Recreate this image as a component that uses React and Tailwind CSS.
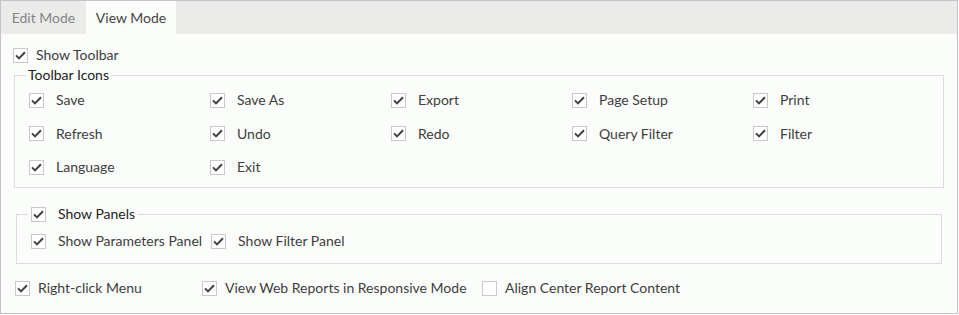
import React from 'react';

function Check({ checked = true }) {
  return (
    <span className="w-[15px] h-[15px] shrink-0 border border-[#c9c9c9] bg-white flex items-center justify-center">
      {checked && (
        <svg width="11" height="9" viewBox="0 0 11 9" fill="none">
          <path d="M1 4.4 L4 7.4 L10 1.2" stroke="#404040" strokeWidth="2" />
        </svg>
      )}
    </span>
  );
}

function Item({ label, checked = true, gap = 'gap-[12px]' }) {
  return (
    <div className={`h-[20px] flex items-center ${gap}`}>
      <Check checked={checked} />
      <span className="text-[#3d3d3d] whitespace-nowrap">{label}</span>
    </div>
  );
}

const icons = [
  'Save', 'Save As', 'Export', 'Page Setup', 'Print',
  'Refresh', 'Undo', 'Redo', 'Query Filter', 'Filter',
  'Language', 'Exit',
];

export default function App() {
  return (
    <div className="w-[958px] h-[314px] border border-[#c6c3c6] bg-[#fbfdfb] text-[14px] leading-[16px] flex flex-col" style={{ fontFamily: 'Lato, "Open Sans", sans-serif' }}>
      {/* tabs */}
      <div className="h-[33px] bg-[#ebecea] flex shrink-0">
        <div className="w-[85px] flex items-center justify-center text-[#858585]">Edit Mode</div>
        <div className="w-[90px] flex items-center justify-center bg-[#fbfdfb] text-[#444]">View Mode</div>
      </div>

      <div className="pl-[12px] mt-[11px]">
        <Item label="Show Toolbar" gap="gap-[8px]" />
      </div>

      <fieldset className="ml-[13px] w-[930px] mt-[2px] border border-[#dcdcdc] pl-[14px] pt-[7px] pb-[10px]">
        <legend className="-ml-[3px] px-[2px] text-[#222] leading-[16px]">Toolbar Icons</legend>
        <div className="grid grid-cols-[181px_181px_181px_181px_181px] gap-y-[13.5px]">
          {icons.map((l) => (
            <Item key={l} label={l} />
          ))}
        </div>
      </fieldset>

      <fieldset className="ml-[15px] w-[926px] mt-[18px] border border-[#dcdcdc] pl-[14px] pt-[9px] pb-[12px]">
        <legend className="-ml-[3px] px-[3px] h-[16px] flex items-center gap-[12px] text-[#222]">
          <Check />
          <span>Show Panels</span>
        </legend>
        <div className="flex gap-[9px]">
          <Item label="Show Parameters Panel" />
          <Item label="Show Filter Panel" />
        </div>
      </fieldset>

      <div className="pl-[14px] mt-[14px] flex">
        <div className="w-[187px]"><Item label="Right-click Menu" gap="gap-[8px]" /></div>
        <div className="w-[280px]"><Item label="View Web Reports in Responsive Mode" gap="gap-[8px]" /></div>
        <Item label="Align Center Report Content" checked={false} gap="gap-[8px]" />
      </div>
    </div>
  );
}
